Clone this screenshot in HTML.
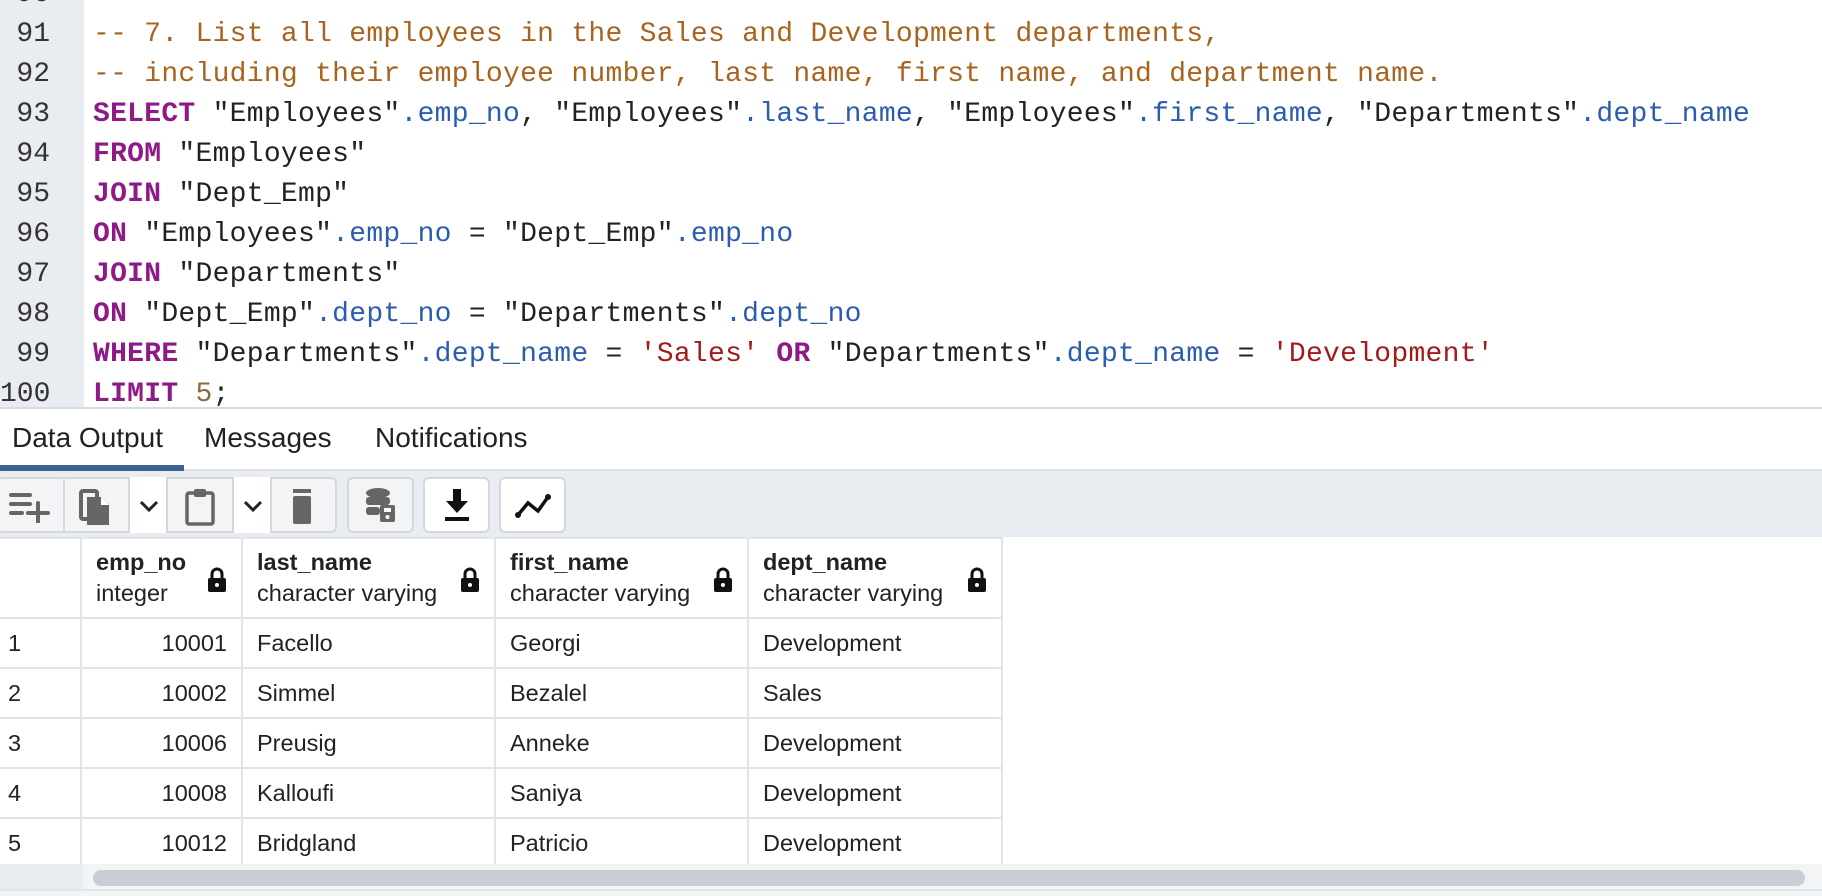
<!DOCTYPE html>
<html><head><style>
*{margin:0;padding:0;box-sizing:border-box}
body{width:1822px;height:896px;overflow:hidden;background:#fff;font-family:"Liberation Sans",sans-serif;position:relative}
#ed{position:absolute;left:0;top:0;width:1822px;height:409px;background:#fff;border-bottom:2px solid #d8dbe0}
#gut{position:absolute;left:0;top:0;width:84px;height:407px;background:#e9ecf1}
.ln{position:absolute;left:0;width:50px;text-align:right;font:28px "Liberation Mono",monospace;color:#333;line-height:40px}
.cl{position:absolute;left:93px;font:28px "Liberation Mono",monospace;letter-spacing:0.28px;color:#222;line-height:40px;white-space:pre}
.c{color:#a8641f}.k{color:#8e1a88;font-weight:bold}.p{color:#2a5db0}.s{color:#a31a1a}.n{color:#8a6a40}
#tabs{position:absolute;top:409px;left:0;width:1822px;height:62px;background:#fff;border-bottom:2px solid #dde0e6}
.tab{position:absolute;top:13px;font-size:28px;color:#222}
#ul{position:absolute;left:0;top:56px;width:184px;height:6px;background:#3a6391}
#tb{position:absolute;top:471px;left:0;width:1822px;height:66px;background:#e9ecf1}
.b{position:absolute;top:6px;height:56px;border:2px solid #d3d7de;border-radius:6px;background:#f3f4f6}
.bw{background:#fff}
svg{position:absolute}
#tbl{position:absolute;top:537px;left:0}
table{border-collapse:collapse;font-size:23.5px;color:#222;table-layout:fixed}
td{border:2px solid #e1e4ea;height:50px;padding:0 14px;background:#fff;white-space:nowrap}
th{border:2px solid #e1e4ea;height:80px;text-align:left;font-weight:normal;padding:0 14px;position:relative;vertical-align:middle;white-space:nowrap}
th b{display:block;line-height:31px}
th span{display:block;line-height:31px}
.lk{position:absolute;right:14px;top:28px}
td.r{text-align:right}
td.f{border-left:none;padding-left:8px}
</style></head><body>
<div id="ed"><div id="gut"></div>
<div class="ln" style="top:-25px">90</div>
<div class="ln" style="top:15px">91</div><div class="ln" style="top:55px">92</div><div class="ln" style="top:95px">93</div><div class="ln" style="top:135px">94</div><div class="ln" style="top:175px">95</div><div class="ln" style="top:215px">96</div><div class="ln" style="top:255px">97</div><div class="ln" style="top:295px">98</div><div class="ln" style="top:335px">99</div><div class="ln" style="top:375px">100</div>
<div class="cl" style="top:15px"><span class="c">-- 7. List all employees in the Sales and Development departments,</span></div>
<div class="cl" style="top:55px"><span class="c">-- including their employee number, last name, first name, and department name.</span></div>
<div class="cl" style="top:95px"><span class="k">SELECT</span> "Employees"<span class="p">.emp_no</span>, "Employees"<span class="p">.last_name</span>, "Employees"<span class="p">.first_name</span>, "Departments"<span class="p">.dept_name</span></div>
<div class="cl" style="top:135px"><span class="k">FROM</span> "Employees"</div>
<div class="cl" style="top:175px"><span class="k">JOIN</span> "Dept_Emp"</div>
<div class="cl" style="top:215px"><span class="k">ON</span> "Employees"<span class="p">.emp_no</span> = "Dept_Emp"<span class="p">.emp_no</span></div>
<div class="cl" style="top:255px"><span class="k">JOIN</span> "Departments"</div>
<div class="cl" style="top:295px"><span class="k">ON</span> "Dept_Emp"<span class="p">.dept_no</span> = "Departments"<span class="p">.dept_no</span></div>
<div class="cl" style="top:335px"><span class="k">WHERE</span> "Departments"<span class="p">.dept_name</span> = <span class="s">'Sales'</span> <span class="k">OR</span> "Departments"<span class="p">.dept_name</span> = <span class="s">'Development'</span></div>
<div class="cl" style="top:375px"><span class="k">LIMIT</span> <span class="n">5</span>;</div>
</div>
<div id="tabs"><div class="tab" style="left:12px">Data Output</div><div class="tab" style="left:204px">Messages</div><div class="tab" style="left:375px">Notifications</div><div id="ul"></div></div>
<div id="tb">
<div class="b" style="left:-4px;width:341px"></div>
<div class="b bw" style="left:128px;width:40px;border-radius:0;border-top:none;border-bottom:none"></div>
<div class="b bw" style="left:232px;width:40px;border-radius:0;border-top:none;border-bottom:none"></div>
<div style="position:absolute;left:63px;top:8px;width:2px;height:52px;background:#d3d7de"></div>
<div class="b" style="left:347px;width:67px"></div>
<div class="b bw" style="left:423px;width:67px"></div>
<div class="b bw" style="left:499px;width:67px"></div>
<svg style="left:8px;top:20px" width="44" height="32"><g stroke="#666" stroke-width="4" stroke-linecap="round"><line x1="3" y1="4" x2="22" y2="4"/><line x1="3" y1="13" x2="22" y2="13"/><line x1="3" y1="22" x2="14" y2="22"/><line x1="20" y1="22" x2="40" y2="22"/><line x1="30" y1="12" x2="30" y2="31"/></g></svg>
<svg style="left:78px;top:16px" width="36" height="40"><rect x="3" y="4" width="16" height="28" rx="2" fill="none" stroke="#666" stroke-width="4"/><path d="M9 10h14l8 8v20H9z" fill="#666"/><path d="M23 10v8h8" fill="#fff"/></svg>
<svg style="left:138px;top:28px" width="22" height="16"><path d="M3 3l8 8 8-8" fill="none" stroke="#222" stroke-width="3"/></svg>
<svg style="left:184px;top:16px" width="32" height="40"><rect x="3" y="6" width="26" height="31" rx="2" fill="none" stroke="#666" stroke-width="3.5"/><rect x="10" y="2" width="12" height="8" rx="2" fill="#666"/></svg>
<svg style="left:242px;top:28px" width="22" height="16"><path d="M3 3l8 8 8-8" fill="none" stroke="#222" stroke-width="3"/></svg>
<svg style="left:290px;top:16px" width="24" height="40"><rect x="3" y="2" width="18" height="4" fill="#666"/><rect x="3" y="9" width="18" height="28" rx="2" fill="#666"/></svg>
<svg style="left:364px;top:16px" width="34" height="38"><ellipse cx="14" cy="6" rx="12" ry="5" fill="#666"/><rect x="2" y="10" width="24" height="8" rx="3" fill="#666"/><rect x="2" y="20" width="14" height="8" rx="3" fill="#666"/><rect x="16" y="18" width="15" height="17" rx="2" fill="#666"/><rect x="20" y="21" width="7" height="4" fill="#fff"/><circle cx="23.5" cy="30" r="2" fill="#fff"/></svg>
<svg style="left:442px;top:16px" width="30" height="38"><path d="M11 2h8v12h7L15 26 4 14h7z" fill="#111"/><rect x="3" y="30" width="24" height="4" fill="#111"/></svg>
<svg style="left:514px;top:20px" width="38" height="30"><polyline points="4,24 14,12 24,20 34,6" fill="none" stroke="#111" stroke-width="3.5"/><circle cx="4" cy="24" r="3" fill="#111"/><circle cx="34" cy="6" r="3" fill="#111"/></svg>
</div>
<div id="tbl"><table>
<colgroup><col style="width:81px"><col style="width:161px"><col style="width:253px"><col style="width:253px"><col style="width:254px"></colgroup>
<tr><th style="border-left:none"></th><th><b>emp_no</b><span>integer</span><svg class="lk" width="20" height="26" viewBox="0 0 20 26"><path d="M5 11V7a5 5 0 0 1 10 0v4" fill="none" stroke="#111" stroke-width="3"/><rect x="1" y="11" width="18" height="14" rx="2" fill="#111"/><circle cx="10" cy="18" r="2" fill="#fff"/></svg></th>
<th><b>last_name</b><span>character varying</span><svg class="lk" width="20" height="26" viewBox="0 0 20 26"><path d="M5 11V7a5 5 0 0 1 10 0v4" fill="none" stroke="#111" stroke-width="3"/><rect x="1" y="11" width="18" height="14" rx="2" fill="#111"/><circle cx="10" cy="18" r="2" fill="#fff"/></svg></th>
<th><b>first_name</b><span>character varying</span><svg class="lk" width="20" height="26" viewBox="0 0 20 26"><path d="M5 11V7a5 5 0 0 1 10 0v4" fill="none" stroke="#111" stroke-width="3"/><rect x="1" y="11" width="18" height="14" rx="2" fill="#111"/><circle cx="10" cy="18" r="2" fill="#fff"/></svg></th>
<th><b>dept_name</b><span>character varying</span><svg class="lk" width="20" height="26" viewBox="0 0 20 26"><path d="M5 11V7a5 5 0 0 1 10 0v4" fill="none" stroke="#111" stroke-width="3"/><rect x="1" y="11" width="18" height="14" rx="2" fill="#111"/><circle cx="10" cy="18" r="2" fill="#fff"/></svg></th></tr>
<tr><td class="f">1</td><td class="r">10001</td><td>Facello</td><td>Georgi</td><td>Development</td></tr>
<tr><td class="f">2</td><td class="r">10002</td><td>Simmel</td><td>Bezalel</td><td>Sales</td></tr>
<tr><td class="f">3</td><td class="r">10006</td><td>Preusig</td><td>Anneke</td><td>Development</td></tr>
<tr><td class="f">4</td><td class="r">10008</td><td>Kalloufi</td><td>Saniya</td><td>Development</td></tr>
<tr><td class="f">5</td><td class="r">10012</td><td>Bridgland</td><td>Patricio</td><td>Development</td></tr>
</table></div>
<div style="position:absolute;left:0;top:864px;width:1822px;height:32px;background:#f3f4f6"></div>
<div style="position:absolute;left:0;top:864px;width:83px;height:25px;background:#e9ecf1"></div>
<div style="position:absolute;left:93px;top:870px;width:1712px;height:16px;border-radius:8px;background:#c9ced6"></div>
<div style="position:absolute;left:0;top:889px;width:1822px;height:2px;background:#e1e4ea"></div>
</body></html>
